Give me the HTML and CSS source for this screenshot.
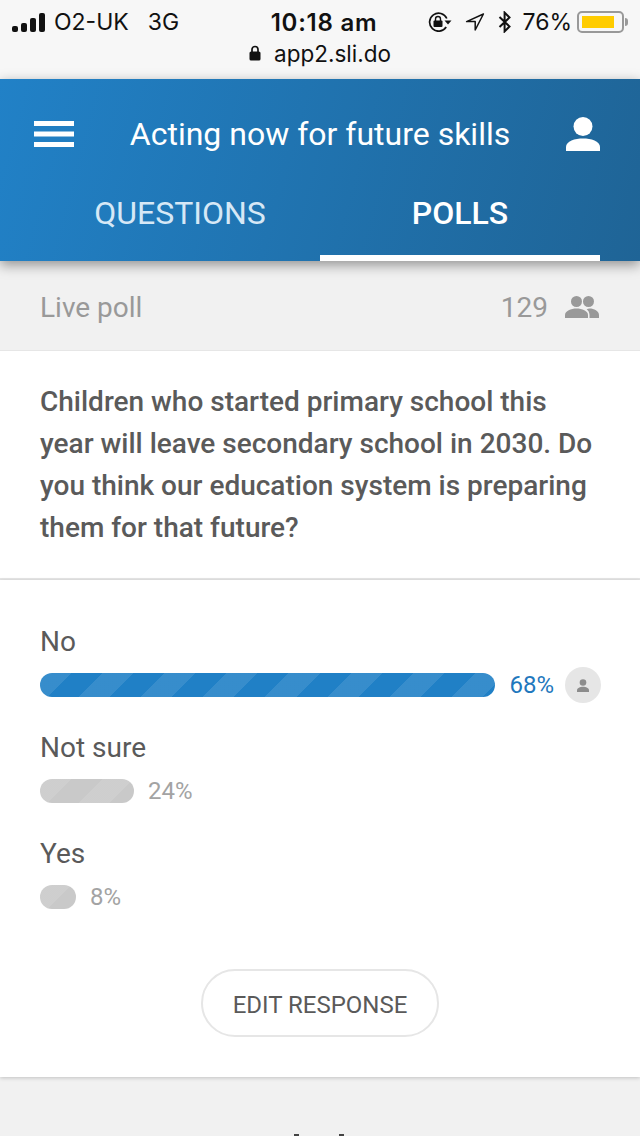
FILE: index.html
```html
<!DOCTYPE html>
<html>
  <head>
    <title>Live poll</title>
    <meta charset="UTF-8" />
    <link rel="stylesheet" href="styles.css">
  </head>
  <body>
    <div class="ios-bar">
      <div class="status-row">
        <div class="status-left">
          <span class="signal"><i></i><i></i><i></i><i></i></span>
          <span class="carrier">O2-UK</span>
          <span class="network">3G</span>
        </div>
        <div class="clock">10:18 am</div>
        <div class="status-right">
          <svg class="rotation-lock" width="24" height="20" viewBox="0 0 24 20">
            <path d="M18.200 15a9 9 0 1 1 .6-8.500" fill="none" stroke="#111" stroke-width="1.700"/>
            <path d="M16.500 8.500h7l-3.500 4z" fill="#111"/>
            <rect x="5.500" y="8.500" width="9" height="6.500" rx="1" fill="#111"/>
            <path d="M7.500 9V7a2.500 2.500 0 0 1 5 0V9" fill="none" stroke="#111" stroke-width="1.400"/>
          </svg>
          <svg class="location" width="20" height="20" viewBox="0 0 20 20">
            <path d="M18.400 2 1.600 9.600h8.600v8.400z" fill="none" stroke="#111" stroke-width="1.500" stroke-linejoin="round"/>
          </svg>
          <svg class="bluetooth" width="14" height="22" viewBox="0 0 14 22">
            <path d="M1.500 6l10 9.500L6.600 20.400V1.600l4.900 4.900L1.500 16" fill="none" stroke="#111" stroke-width="2"/>
          </svg>
          <span class="battery-pct">76%</span>
          <span class="battery"><span class="battery-fill"></span></span>
          <span class="battery-tip"></span>
        </div>
      </div>
      <div class="url-row">
        <svg width="12" height="16" viewBox="0 0 12 16">
          <path d="M3 7V4.500a3 3 0 0 1 6 0V7" fill="none" stroke="#111" stroke-width="1.700"/>
          <rect x="0.500" y="6.500" width="11" height="9" rx="1.600" fill="#111"/>
        </svg>
        <span>app2.sli.do</span>
      </div>
    </div>

    <header class="app-header">
      <div class="top-row">
        <svg class="menu-icon" width="40" height="26" viewBox="0 0 40 26">
          <path d="M0 0h40v5H0zM0 10.500h40v5H0zM0 21h40v5H0z" fill="#fff"/>
        </svg>
        <div class="event-title">Acting now for future skills</div>
        <svg class="user-icon" width="34" height="34" viewBox="0 0 34 34">
          <circle cx="17" cy="9.500" r="9.500" fill="#fff"/>
          <path d="M0 34v-4c0-6 9-8.500 17-8.500S34 24 34 30v4z" fill="#fff"/>
        </svg>
      </div>
      <nav class="tabs">
        <div class="tab">QUESTIONS</div>
        <div class="tab active">POLLS</div>
      </nav>
    </header>

    <div class="poll-bar">
      <span class="poll-label">Live poll</span>
      <div class="voters">
        <span>129</span>
        <svg width="34" height="22" viewBox="0 0 34 22">
          <circle cx="11.500" cy="5.500" r="5.500" fill="#999"/>
          <circle cx="23.500" cy="5.500" r="5.500" fill="#999"/>
          <path d="M0 22v-3c0-4 6-6.500 11.500-6.500S23 15 23 19v3z" fill="#999"/>
          <path d="M24.500 22v-3c0-2.300-1-4.300-2.800-5.800.8-.4 1.800-.7 2.800-.7 4.500 0 9.500 2.500 9.500 6.500v3z" fill="#999"/>
        </svg>
      </div>
    </div>

    <section class="question">
      Children who started primary school this year will leave secondary school in 2030. Do you think our education system is preparing them for that future?
    </section>

    <section class="results">
      <div class="option">
        <div class="option-label">No</div>
        <div class="bar-row">
          <div class="bar bar-blue" style="width: 456px"></div>
          <span class="pct pct-blue">68%</span>
          <span class="my-vote">
            <svg width="14" height="13" viewBox="0 0 14 13">
              <circle cx="7" cy="3.500" r="3.300" fill="#8c8c8c"/>
              <path d="M1 13v-1.500C1 9 4 7.800 7 7.800s6 1.200 6 3.700V13z" fill="#8c8c8c"/>
            </svg>
          </span>
        </div>
      </div>
      <div class="option">
        <div class="option-label">Not sure</div>
        <div class="bar-row">
          <div class="bar bar-grey" style="width: 94px"></div>
          <span class="pct">24%</span>
        </div>
      </div>
      <div class="option">
        <div class="option-label">Yes</div>
        <div class="bar-row">
          <div class="bar bar-grey" style="width: 36px"></div>
          <span class="pct">8%</span>
        </div>
      </div>
      <div class="edit-wrap">
        <button class="edit-btn">EDIT RESPONSE</button>
      </div>
    </section>

    <!-- tops of a heading cut off by the bottom of the screen -->
    <div class="footer-peek"><i></i><i></i></div>
  </body>
</html>
```

FILE: styles.css
```css
html,
body {
  height: 1136px;
  overflow: hidden;
}

body {
  margin: 0;
  font-family: Roboto, sans-serif;
  background-color: #f1f1f1;
  color: #5a5a5a;
}

.ios-bar {
  height: 79px;
  box-sizing: border-box;
  background-color: #f7f7f7;
  color: #111;
  font-family: Inter, "Liberation Sans", sans-serif;
  padding: 8px 0 0 12px;
}

.status-row {
  display: flex;
  align-items: center;
  justify-content: space-between;
  height: 28px;
  font-size: 23px;
  padding-right: 12px;
}

.status-left {
  display: flex;
  align-items: center;
  width: 228px;
}

.signal {
  display: flex;
  align-items: flex-end;
  gap: 3px;
  height: 19px;
  margin-right: 9px;
}

.signal i {
  display: block;
  width: 6px;
  border-radius: 2px;
  background-color: #111;
}

.signal i:nth-child(1) { height: 6px; }
.signal i:nth-child(2) { height: 9px; }
.signal i:nth-child(3) { height: 14px; }
.signal i:nth-child(4) { height: 19px; }

.network {
  margin-left: 19px;
}

.clock {
  font-size: 24px;
  font-weight: 600;
  letter-spacing: 0.75px;
}

.status-right {
  display: flex;
  align-items: center;
  justify-content: flex-end;
  width: 220px;
}

.rotation-lock { margin-right: 13px; }
.location { margin-right: 13px; }
.bluetooth { margin-right: 10px; }

.battery {
  display: block;
  box-sizing: border-box;
  width: 47px;
  height: 22px;
  margin-left: 5px;
  padding: 3px;
  border: 2px solid #999;
  border-radius: 5px;
}

.battery-fill {
  display: block;
  width: 32px;
  height: 100%;
  background-color: #ffcc00;
}

.battery-tip {
  display: block;
  width: 3px;
  height: 8px;
  margin-left: 1px;
  background-color: #999;
  border-radius: 0 3px 3px 0;
}

.url-row {
  display: flex;
  align-items: center;
  justify-content: center;
  gap: 13px;
  height: 34px;
  padding-right: 12px;
  font-size: 22.500px;
}

.app-header {
  position: relative;
  height: 182px;
  background: linear-gradient(105deg, #2181c7 0%, #1f6496 100%);
  box-shadow: 0 4px 12px rgba(0, 0, 0, 0.4);
  color: #fff;
}

.top-row {
  display: flex;
  align-items: center;
  justify-content: space-between;
  height: 110px;
  padding: 0 40px 0 34px;
}

.event-title {
  font-size: 32px;
}

.tabs {
  display: flex;
  padding: 0 40px;
}

.tab {
  width: 280px;
  height: 72px;
  box-sizing: border-box;
  padding-top: 1px;
  line-height: 46px;
  text-align: center;
  font-size: 32px;
  color: #d6e8f6;
}

.tab.active {
  color: #fff;
  font-weight: 500;
  border-bottom: 6px solid #fff;
}

.poll-bar {
  display: flex;
  align-items: center;
  justify-content: space-between;
  height: 89px;
  box-sizing: border-box;
  padding: 3px 41px 0 40px;
  font-size: 28px;
  color: #999;
}

.voters {
  display: flex;
  align-items: center;
  gap: 17px;
}

.question {
  box-sizing: border-box;
  height: 230px;
  padding: 30px 40px 0;
  background-color: #fff;
  border-top: 1px solid #e6e6e6;
  border-bottom: 2px solid #e6e6e6;
  font-size: 28px;
  font-weight: 500;
  line-height: 42px;
}

.results {
  height: 497px;
  box-sizing: border-box;
  padding: 44px 39px 0 40px;
  background-color: #fff;
  box-shadow: 0 1px 4px rgba(0, 0, 0, 0.2);
}

.option {
  height: 106px;
}

.option-label {
  font-size: 28px;
  line-height: 36px;
}

.bar-row {
  display: flex;
  align-items: center;
  height: 36px;
  margin-top: 7px;
}

.bar {
  height: 24px;
  border-radius: 12px;
}

.bar-blue {
  background-color: #2080c6;
  background-image: repeating-linear-gradient(135deg, rgba(255, 255, 255, 0.1) 0 22px, transparent 22px 44px);
}

.bar-grey {
  background-color: #c9c9c9;
  background-image: repeating-linear-gradient(135deg, rgba(255, 255, 255, 0.1) 0 22px, transparent 22px 44px);
}

.pct {
  margin-left: 14px;
  font-size: 24px;
  color: #a3a3a3;
}

.pct-blue {
  color: #1f78bd;
}

.my-vote {
  display: flex;
  align-items: center;
  justify-content: center;
  width: 36px;
  height: 36px;
  margin-left: 11px;
  border-radius: 50%;
  background-color: #e6e6e6;
}

.edit-wrap {
  display: flex;
  justify-content: center;
  margin-top: 27px;
  padding-right: 1px;
}

.edit-btn {
  width: 238px;
  height: 68px;
  padding-top: 4px;
  border: 2px solid #e6e6e6;
  border-radius: 34px;
  background-color: #fff;
  font-family: Roboto, sans-serif;
  font-size: 24px;
  color: #5a5a5a;
}

.footer-peek {
  display: flex;
  justify-content: center;
  gap: 40px;
  margin-top: 57px;
  padding-right: 3px;
}

.footer-peek i {
  display: block;
  width: 5px;
  height: 2px;
  background-color: #444;
}
```
